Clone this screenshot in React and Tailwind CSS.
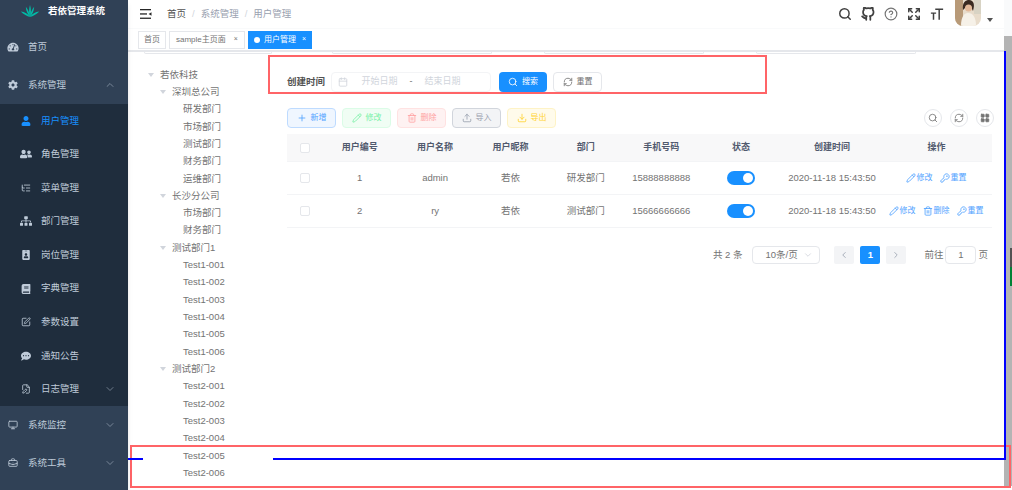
import {
  Search, HelpCircle, Plus, Pencil, Trash2, Upload, Download, RefreshCw,
  ChevronUp, ChevronDown, ChevronLeft, ChevronRight, Calendar, LayoutGrid, KeyRound,
  Monitor, BriefcaseBusiness, Expand, ListTree, SquarePen, FileEdit
} from 'lucide-react';
import { FiGithub } from 'react-icons/fi';
import {
  FaTachometerAlt, FaCog, FaUser, FaUserFriends, FaSitemap, FaIdBadge, FaBook, FaCommentDots
} from 'react-icons/fa';

const subMenu = [
  { label: '用户管理', icon: FaUser, active: true },
  { label: '角色管理', icon: FaUserFriends },
  { label: '菜单管理', icon: ListTree },
  { label: '部门管理', icon: FaSitemap },
  { label: '岗位管理', icon: FaIdBadge },
  { label: '字典管理', icon: FaBook },
  { label: '参数设置', icon: SquarePen },
  { label: '通知公告', icon: FaCommentDots },
  { label: '日志管理', icon: FileEdit, arrow: true },
];

const tree = [
  [0, '若依科技'],
  [1, '深圳总公司'],
  [2, '研发部门'], [2, '市场部门'], [2, '测试部门'], [2, '财务部门'], [2, '运维部门'],
  [1, '长沙分公司'],
  [2, '市场部门'], [2, '财务部门'],
  [1, '测试部门1'],
  [2, 'Test1-001'], [2, 'Test1-002'], [2, 'Test1-003'], [2, 'Test1-004'], [2, 'Test1-005'], [2, 'Test1-006'],
  [1, '测试部门2'],
  [2, 'Test2-001'], [2, 'Test2-002'], [2, 'Test2-003'], [2, 'Test2-004'], [2, 'Test2-005'], [2, 'Test2-006'],
];

const toolbar = [
  { label: '新增', icon: Plus, cls: 'bg-blue-50 border-blue-200 text-blue-400' },
  { label: '修改', icon: Pencil, cls: 'bg-green-50 border-green-100 text-green-300' },
  { label: '删除', icon: Trash2, cls: 'bg-red-50 border-red-100 text-red-300' },
  { label: '导入', icon: Upload, cls: 'bg-gray-100 border-gray-300 text-gray-400' },
  { label: '导出', icon: Download, cls: 'bg-amber-50 border-amber-100 text-amber-300' },
];

const users = [
  { id: 1, name: 'admin', nick: '若依', dept: '研发部门', phone: '15888888888', canDelete: false },
  { id: 2, name: 'ry', nick: '若依', dept: '测试部门', phone: '15666666666', canDelete: true },
];

const tableCols = 'grid grid-cols-[35px_repeat(5,75.4px)_84px_98px_1fr] items-center text-center';

const Logo = () => (
  <svg viewBox="0 0 20 13" className="w-5 h-3 text-teal-500" fill="currentColor">
    <path d="M10 13 C8.5 9 8.8 4 10 0 C11.2 4 11.5 9 10 13Z" />
    <path d="M10 13 C7.5 10 5.8 7 5.5 2 C8 5 9.5 9 10 13Z" />
    <path d="M10 13 C12.5 10 14.2 7 14.5 2 C12 5 10.5 9 10 13Z" />
    <path d="M10 13 C7 12 3 10 0 7 C4 7.5 8 9.5 10 13Z" />
    <path d="M10 13 C13 12 17 10 20 7 C16 7.5 12 9.5 10 13Z" />
  </svg>
);

const Hamburger = () => (
  <svg viewBox="0 0 12 10" className="w-3 h-2.5 text-neutral-800" fill="currentColor">
    <rect x="0" y="0" width="11" height="1.3" />
    <rect x="0" y="4.3" width="7" height="1.3" />
    <rect x="0" y="8.6" width="11" height="1.3" />
    <path d="M11.5 3.2 L8.6 5 L11.5 6.8Z" />
  </svg>
);

const SizeIcon = () => (
  <svg viewBox="0 0 16 16" className="size-3.5 text-neutral-700" fill="none" stroke="currentColor" strokeWidth="1.7">
    <path d="M6 2.5 H15 M10.5 2.5 V14.5" />
    <path d="M1 7 H7 M4 7 V14.5" />
  </svg>
);

const Avatar = () => (
  <svg viewBox="0 0 26 26" className="size-6.5 rounded-b-lg">
    <rect width="26" height="26" fill="#e8dccb" />
    <rect width="8" height="26" fill="#b89a78" />
    <rect x="19" width="7" height="14" fill="#d8d3c4" />
    <path d="M8 10 C7 2 11 0 14 0 C19 0 20 5 18 11 L16 7 L11 7Z" fill="#3a2a20" />
    <circle cx="13.5" cy="8" r="3.5" fill="#e3b999" />
    <path d="M6 26 C6 17 9 13 13 13 C18 13 21 17 21 26Z" fill="#f6f1e8" />
  </svg>
);

const Caret = ({ className }) => (
  <svg viewBox="0 0 6 4" className={className} fill="currentColor">
    <path d="M0 0 H6 L3 4Z" />
  </svg>
);

const Sidebar = () => (
  <aside className="w-32 h-full shrink-0 flex flex-col pb-2 bg-[#304156] text-[#bfcbd9] text-[9.5px] shadow-md z-10">
    <div className="h-7 flex items-center pl-5 pb-1.5 gap-2">
      <Logo />
      <span className="font-bold text-white text-[9.5px]">若依管理系统</span>
    </div>
    <div className="h-9.5 flex items-center pl-1.5 gap-2">
      <FaTachometerAlt className="w-3.5 h-2.5" />
      <span>首页</span>
    </div>
    <div className="h-9.5 flex items-center pl-1.5 gap-2">
      <FaCog className="w-3.5 h-2.5" />
      <span className="flex-1">系统管理</span>
      <ChevronUp className="size-3 mr-3 opacity-50" />
    </div>
    <div className="flex-1 flex flex-col bg-[#1f2d3d]">
      {subMenu.map((item) => {
        const Icon = item.icon;
        return (
          <div
            key={item.label}
            className={`flex-1 flex items-center pl-5 gap-2.25 ${item.active ? 'text-[#1890ff]' : ''}`}
          >
            <Icon className="w-3 h-2.5" />
            <span className="flex-1">{item.label}</span>
            {item.arrow && <ChevronDown className="size-3 mr-3 opacity-50" />}
          </div>
        );
      })}
    </div>
    <div className="h-9.5 flex items-center pl-1.5 gap-2">
      <Monitor className="w-3.5 h-2.5" />
      <span className="flex-1">系统监控</span>
      <ChevronDown className="size-3 mr-3 opacity-50" />
    </div>
    <div className="h-9.5 flex items-center pl-1.5 gap-2">
      <BriefcaseBusiness className="w-3.5 h-2.5" />
      <span className="flex-1">系统工具</span>
      <ChevronDown className="size-3 mr-3 opacity-50" />
    </div>
  </aside>
);

const TopBar = () => (
  <div className="h-7 shrink-0 flex items-center pl-3 text-[9.5px]">
    <Hamburger />
    <span className="ml-3.75 text-neutral-600">首页</span>
    <span className="mx-1.5 text-gray-300">/</span>
    <span className="text-gray-400">系统管理</span>
    <span className="mx-1.5 text-gray-300">/</span>
    <span className="text-gray-400">用户管理</span>
    <div className="ml-auto flex items-center gap-2.25 text-neutral-700">
      <Search className="size-3.5" strokeWidth={2.5} />
      <FiGithub className="size-3.5" strokeWidth={3} />
      <HelpCircle className="size-3.5 text-neutral-500" />
      <Expand className="size-3.5" strokeWidth={2.5} />
      <SizeIcon />
    </div>
    <div className="ml-2.75 self-start"><Avatar /></div>
    <Caret className="w-1.5 h-1 ml-1.5 mr-2.75 mt-3 text-neutral-600" />
  </div>
);

const TagBar = () => (
  <div className="h-6 shrink-0 flex items-center pl-2.5 gap-0.75 border-t border-gray-50 border-b-2 border-b-gray-200 text-[8px] text-neutral-500">
    <span className="h-4.5 w-7 flex items-center justify-center border border-gray-200">首页</span>
    <span className="h-4.5 px-1.5 flex items-center gap-2 border border-gray-200">
      sample主页面 <span className="text-[7px]">×</span>
    </span>
    <span className="h-4.5 px-1.5 flex items-center gap-1 bg-[#1890ff] text-white">
      <span className="size-1.5 rounded-full bg-white" />
      用户管理 <span className="text-[7px] ml-0.5">×</span>
    </span>
  </div>
);

// bottoms of the query inputs, scrolled away under the tag bar
const ScrolledOff = () => (
  <div className="h-0.5 -mb-0.5 flex shrink-0">
    <div className="ml-4 w-32 border border-t-0 border-gray-200 rounded-b-sm" />
    <div className="ml-15 w-40 border border-t-0 border-gray-200 rounded-b-sm" />
    <div className="ml-13 w-40 border border-t-0 border-gray-200 rounded-b-sm" />
    <div className="ml-13 w-40 border border-t-0 border-gray-200 rounded-b-sm" />
  </div>
);

const FilterForm = () => (
  <div className="h-5 flex items-center text-[9.5px]">
    <label className="w-11 font-bold text-neutral-600">创建时间</label>
    <div className="w-40 h-5 flex items-center border border-gray-100 rounded-sm text-[9px] text-gray-300 pl-1.5 pr-6">
      <Calendar className="size-2.5 mr-2" />
      <span className="flex-1 text-center">开始日期</span>
      <span className="w-4 text-center text-neutral-500">-</span>
      <span className="flex-1 text-center">结束日期</span>
    </div>
    <button className="ml-2 w-12 h-5 flex items-center justify-center gap-1 rounded-sm bg-[#1890ff] text-[8px] text-white">
      <Search className="size-2.5" />搜索
    </button>
    <button className="ml-1.5 w-12.25 h-5 flex items-center justify-center gap-1 rounded-sm border border-gray-200 text-[8px] text-neutral-500">
      <RefreshCw className="size-2.5" />重置
    </button>
  </div>
);

const Toolbar = () => (
  <div className="mt-4 h-5 flex items-center gap-1.5 text-[8px]">
    {toolbar.map((b) => {
      const Icon = b.icon;
      return (
        <button key={b.label} className={`w-12.25 h-5 flex items-center justify-center gap-1 rounded-sm border ${b.cls}`}>
          <Icon className="size-2.5" />{b.label}
        </button>
      );
    })}
    <div className="ml-auto -mr-0.5 flex items-center gap-2 text-neutral-500">
      <span className="size-4.5 flex items-center justify-center rounded-full border border-gray-200"><Search className="size-2.5" /></span>
      <span className="size-4.5 flex items-center justify-center rounded-full border border-gray-200"><RefreshCw className="size-2.5" /></span>
      <span className="size-4.5 flex items-center justify-center rounded-full border border-gray-200"><LayoutGrid className="size-2.5 fill-current" /></span>
    </div>
  </div>
);

const Checkbox = () => <span className="block mx-auto size-2.5 border border-gray-200 rounded-xs bg-white" />;

const UserTable = () => (
  <div className="mt-1.5 text-[9.5px]">
    <div className={`${tableCols} h-7 bg-[#f8f8f9] border-b border-gray-100 text-[9px] font-bold text-[#515a6e]`}>
      <Checkbox />
      <span>用户编号</span>
      <span>用户名称</span>
      <span>用户昵称</span>
      <span>部门</span>
      <span>手机号码</span>
      <span>状态</span>
      <span>创建时间</span>
      <span>操作</span>
    </div>
    {users.map((u) => (
      <div key={u.id} className={`${tableCols} py-2 leading-4 border-b border-gray-100 text-neutral-500`}>
        <Checkbox />
        <span>{u.id}</span>
        <span>{u.name}</span>
        <span>{u.nick}</span>
        <span>{u.dept}</span>
        <span>{u.phone}</span>
        <span className="w-7 h-3.5 mx-auto flex items-center justify-end pr-0.5 rounded-full bg-[#1890ff]">
          <span className="size-2.5 rounded-full bg-white" />
        </span>
        <span>2020-11-18 15:43:50</span>
        <span className="flex items-center justify-center gap-2 text-[8px] text-blue-400">
          <span className="flex items-center"><Pencil className="size-2.5" />修改</span>
          {u.canDelete && <span className="flex items-center"><Trash2 className="size-2.5" />删除</span>}
          <span className="flex items-center"><KeyRound className="size-2.5" />重置</span>
        </span>
      </div>
    ))}
  </div>
);

const Pagination = () => (
  <div className="mt-4.5 flex items-center justify-end pr-1 text-[9.5px] text-neutral-500">
    <span>共 2 条</span>
    <span className="ml-2.5 w-17 h-4.5 flex items-center justify-between pl-3 pr-1.5 border border-gray-200 rounded-sm">
      10条/页 <ChevronDown className="size-2.5 text-gray-300" />
    </span>
    <span className="ml-3.5 h-4.5 w-5 flex items-center justify-center rounded-xs bg-gray-100 text-gray-400"><ChevronLeft className="size-2.5" /></span>
    <span className="ml-1.5 h-4.5 w-5 flex items-center justify-center rounded-xs bg-[#1890ff] font-bold text-white">1</span>
    <span className="ml-1.5 h-4.5 w-5 flex items-center justify-center rounded-xs bg-gray-100 text-gray-400"><ChevronRight className="size-2.5" /></span>
    <span className="ml-4.5">前往</span>
    <span className="ml-0.5 w-7.75 h-4.5 flex items-center justify-center border border-gray-200 rounded-sm">1</span>
    <span className="ml-0.5">页</span>
  </div>
);

const Tree = () => (
  <div className="w-[159px] shrink-0 flex flex-col pt-3.5 pb-2 text-[9.5px] text-neutral-500">
    {tree.map(([depth, label], i) => (
      <div
        key={i}
        className={`flex-1 flex items-center ${depth === 0 ? 'pl-5' : depth === 1 ? 'pl-8' : 'pl-13.75'}`}
      >
        {depth < 2 && <Caret className="w-1.5 h-1 mr-1.5 text-gray-300" />}
        {label}
      </div>
    ))}
  </div>
);

// hand-drawn marks that sit on top of the screenshot
const Annotations = () => (
  <>
    <div className="absolute left-[268px] top-[55px] w-[499px] h-[39px] border-2 border-red-400" />
    <div className="absolute left-[130px] top-[445px] w-[881px] h-[43px] border-2 border-red-400" />
    <div className="absolute left-[1004px] top-[51px] w-0.5 h-[409px] bg-[#0000ff]" />
    <div className="absolute left-32 top-[458px] w-[15px] h-0.5 bg-[#0000ff]" />
    <div className="absolute left-[273px] top-[458px] w-[732px] h-0.5 bg-[#0000ff]" />
    <div className="absolute right-0 top-[248px] w-0.5 h-[19px] bg-neutral-600" />
    <div className="absolute right-0 top-[267px] w-0.5 h-[19px] bg-green-700" />
  </>
);

const App = () => (
  <div className="relative w-full h-[490px] flex overflow-hidden bg-white font-['Liberation_Sans','Noto_Sans_CJK_SC',sans-serif]">
    <Sidebar />
    <main className="flex-1 min-w-0 flex flex-col">
      <TopBar />
      <TagBar />
      <ScrolledOff />
      <div className="flex-1 min-h-0 flex">
        <Tree />
        <div className="flex-1 min-w-0 pt-5 pr-3">
          <FilterForm />
          <Toolbar />
          <UserTable />
          <Pagination />
        </div>
      </div>
    </main>
    <div className="w-2 shrink-0 flex flex-col">
      <div className="h-9 bg-gray-50" />
      <div className="h-[450px] bg-neutral-400/80" />
    </div>
    <Annotations />
  </div>
);

export default App;
